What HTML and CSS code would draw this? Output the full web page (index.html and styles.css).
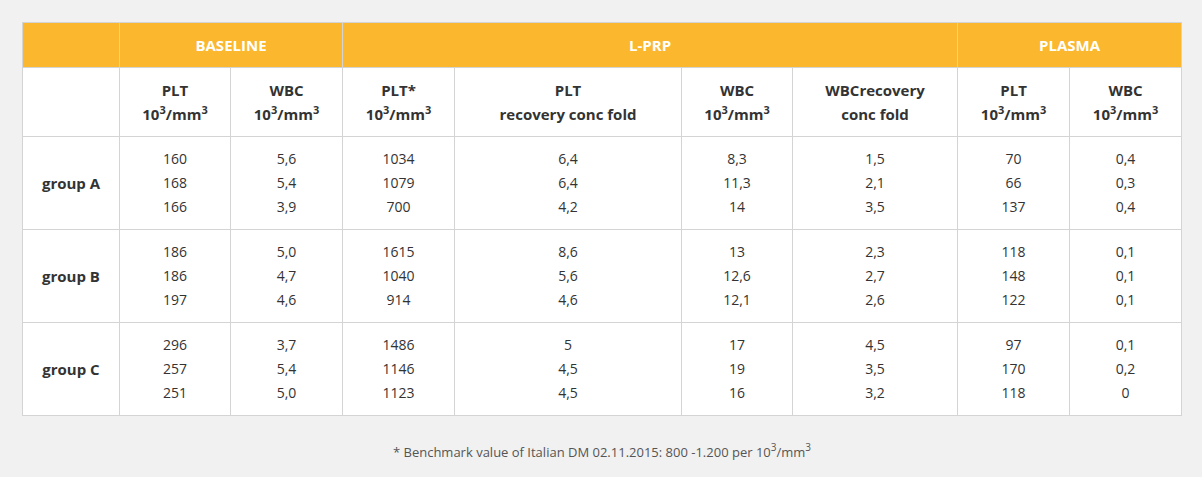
FILE: index.html
```html
<!DOCTYPE html>
<html>
<head>
<meta charset="utf-8">
<link rel="stylesheet" href="styles.css">
</head>
<body>
<div class="wrap">
<table class="data">
<colgroup>
<col style="width:97px"><col style="width:111px"><col style="width:112px"><col style="width:112px"><col style="width:227px"><col style="width:111px"><col style="width:165px"><col style="width:112px"><col style="width:112px">
</colgroup>
<thead>
<tr class="top">
<th></th>
<th colspan="2">BASELINE</th>
<th colspan="4">L-PRP</th>
<th colspan="2">PLASMA</th>
</tr>
<tr class="sub">
<th></th>
<th>PLT<br>10<sup>3</sup>/mm<sup>3</sup></th>
<th>WBC<br>10<sup>3</sup>/mm<sup>3</sup></th>
<th>PLT*<br>10<sup>3</sup>/mm<sup>3</sup></th>
<th>PLT<br>recovery conc fold</th>
<th>WBC<br>10<sup>3</sup>/mm<sup>3</sup></th>
<th>WBCrecovery<br>conc fold</th>
<th>PLT<br>10<sup>3</sup>/mm<sup>3</sup></th>
<th>WBC<br>10<sup>3</sup>/mm<sup>3</sup></th>
</tr>
</thead>
<tbody>
<tr>
<th class="grp">group A</th>
<td>160<br>168<br>166</td>
<td>5,6<br>5,4<br>3,9</td>
<td>1034<br>1079<br>700</td>
<td>6,4<br>6,4<br>4,2</td>
<td>8,3<br>11,3<br>14</td>
<td>1,5<br>2,1<br>3,5</td>
<td>70<br>66<br>137</td>
<td>0,4<br>0,3<br>0,4</td>
</tr>
<tr>
<th class="grp">group B</th>
<td>186<br>186<br>197</td>
<td>5,0<br>4,7<br>4,6</td>
<td>1615<br>1040<br>914</td>
<td>8,6<br>5,6<br>4,6</td>
<td>13<br>12,6<br>12,1</td>
<td>2,3<br>2,7<br>2,6</td>
<td>118<br>148<br>122</td>
<td>0,1<br>0,1<br>0,1</td>
</tr>
<tr>
<th class="grp">group C</th>
<td>296<br>257<br>251</td>
<td>3,7<br>5,4<br>5,0</td>
<td>1486<br>1146<br>1123</td>
<td>5<br>4,5<br>4,5</td>
<td>17<br>19<br>16</td>
<td>4,5<br>3,5<br>3,2</td>
<td>97<br>170<br>118</td>
<td>0,1<br>0,2<br>0</td>
</tr>
</tbody>
</table>
<p class="note">* Benchmark value of Italian DM 02.11.2015: 800 -1.200 per 10<sup>3</sup>/mm<sup>3</sup></p>
</div>
</body>
</html>
```
FILE: styles.css
```css
html, body {
  margin: 0;
  padding: 0;
  background: #f1f1f1;
}
body {
  font-family: "Open Sans", "Liberation Sans", sans-serif;
  font-size: 14px;
  color: #333;
}
.wrap {
  padding: 22px 0 0 22px;
}
.data {
  border-collapse: collapse;
  table-layout: fixed;
  width: 1160px;
  background: #fff;
}
.data th, .data td {
  border: 1px solid #d4d4d4;
  text-align: center;
  vertical-align: middle;
  line-height: 24px;
  padding: 0 4px;
}
.data th {
  font-weight: 700;
  font-size: 15px;
  color: #333;
}
.data tr.top th {
  background: #fbb72e;
  color: #fff;
  height: 44px;
}
.data tr.sub th {
  height: 68px;
}
.data tbody td, .data tbody th {
  height: 92px;
}
.data td {
  color: #333;
}
sup {
  font-size: 10px;
  line-height: 0;
  vertical-align: 5px;
}
.data th sup {
  font-size: 11px;
  vertical-align: 6px;
}
.note {
  width: 1160px;
  margin: 27px 0 0 0;
  text-align: center;
  font-size: 13px;
  color: #555;
}
.note sup {
  vertical-align: 6px;
}
```
